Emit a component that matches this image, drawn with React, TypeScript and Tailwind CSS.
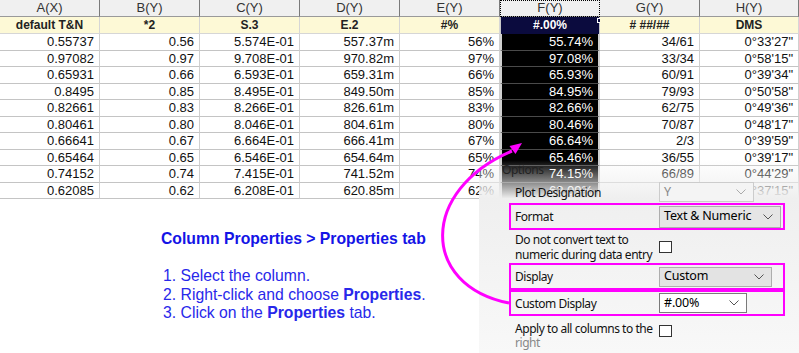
import React from "react";

const heads = ["A(X)", "B(Y)", "C(Y)", "D(Y)", "E(Y)", "F(Y)", "G(Y)", "H(Y)"];
const longNames = ["default T&N", "*2", "S.3", "E.2", "#%", "#.00%", "# ##/##", "DMS"];

const rows = [
  ["0.55737", "0.56", "5.574E-01", "557.37m", "56%", "55.74%", "34/61", "0°33'27\""],
  ["0.97082", "0.97", "9.708E-01", "970.82m", "97%", "97.08%", "33/34", "0°58'15\""],
  ["0.65931", "0.66", "6.593E-01", "659.31m", "66%", "65.93%", "60/91", "0°39'34\""],
  ["0.8495", "0.85", "8.495E-01", "849.50m", "85%", "84.95%", "79/93", "0°50'58\""],
  ["0.82661", "0.83", "8.266E-01", "826.61m", "83%", "82.66%", "62/75", "0°49'36\""],
  ["0.80461", "0.80", "8.046E-01", "804.61m", "80%", "80.46%", "70/87", "0°48'17\""],
  ["0.66641", "0.67", "6.664E-01", "666.41m", "67%", "66.64%", "2/3", "0°39'59\""],
  ["0.65464", "0.65", "6.546E-01", "654.64m", "65%", "65.46%", "36/55", "0°39'17\""],
  ["0.74152", "0.74", "7.415E-01", "741.52m", "74%", "74.15%", "66/89", "0°44'29\""],
  ["0.62085", "0.62", "6.208E-01", "620.85m", "62%", "62.09%", "18/29", "0°37'15\""],
];

const Chevron = ({ color = "#555" }: { color?: string }) => (
  <svg width="10" height="6" viewBox="0 0 10 6" className="shrink-0">
    <polyline points="0.5,0.5 5,5 9.5,0.5" fill="none" stroke={color} strokeWidth="1" />
  </svg>
);

const Select = ({
  text,
  className,
  textClass = "text-black",
  chevron,
}: {
  text: string;
  className: string;
  textClass?: string;
  chevron?: string;
}) => (
  <div className={`flex items-center justify-between pl-[4px] pr-[7px] border ${className}`}>
    <span className={`text-[12.5px] tracking-[-0.2px] leading-none whitespace-nowrap ${textClass}`}>{text}</span>
    <Chevron color={chevron} />
  </div>
);

const Sheet = () => (
  <div className="grid grid-cols-[repeat(7,100px)_99px] font-['Liberation_Sans',Arial,sans-serif]">
    {heads.map((h, i) => (
      <div
        key={h}
        className={`h-[17px] bg-[#f0f0f0] border-b border-b-[#9a9a9a] text-center text-[13px] leading-[16px] text-[#333] ${
          i === 5 ? "outline-1 outline-dotted outline-black -outline-offset-1" : "border-r border-r-[#7a7a7a]"
        }`}
      >
        {h}
      </div>
    ))}
    {longNames.map((n, i) => (
      <div
        key={n}
        className={`relative h-[17px] text-center font-bold text-[12px] leading-[17px] ${
          i === 5
            ? "bg-[#0b0b3e] text-white border-x border-x-[#c8c8c8]"
            : "bg-[#fdf9d6] text-[#222] border-r border-r-[#d6d6d6] border-b border-b-[#d6d6d6]"
        }`}
      >
        {n}
        {i === 5 && (
          <span className="absolute -right-[3px] top-[1px] w-[5px] h-[5px] bg-[#0b0b3e] border border-white" />
        )}
      </div>
    ))}
    {rows.map((r, ri) =>
      r.map((c, ci) => (
        <div
          key={`${ri}-${ci}`}
          className={`h-[16.5px] text-right pr-[5px] text-[13px] leading-[16px] ${
            ci === 5
              ? "bg-black text-white border-x-2 border-x-[#d0d0d0] border-b border-b-[#4a4a4a]"
              : "text-[#111] border-r border-r-[#d0d0d0] border-b border-b-[#c4c4c4]"
          }`}
        >
          {c}
        </div>
      ))
    )}
  </div>
);

const Notes = () => (
  <div className="pl-[161px] pt-[31px] font-['Liberation_Sans',Arial,sans-serif]">
    <div className="text-[15.75px] leading-[18px] font-bold text-[#1414e6]">Column Properties &gt; Properties tab</div>
    <ol className="mt-[19px] pl-[2px] text-[15.75px] leading-[18.5px] text-[#2828ea]">
      <li>1. Select the column.</li>
      <li>
        2. Right-click and choose <b>Properties</b>.
      </li>
      <li>
        3. Click on the <b>Properties</b> tab.
      </li>
    </ol>
  </div>
);

const Row = ({ boxed, className = "", children }: { boxed?: boolean; className?: string; children: React.ReactNode }) => (
  <div
    className={`flex items-center w-[276px] pl-[4px] border-2 ${boxed ? "border-[#ff00ff]" : "border-transparent"} ${className}`}
  >
    {children}
  </div>
);

const Label = ({ children, tight }: { children: React.ReactNode; tight?: boolean }) => (
  <div
    className={`w-[144px] shrink-0 whitespace-nowrap text-[12px] tracking-[-0.45px] text-[#111] ${
      tight ? "leading-[13.5px]" : "leading-[15px]"
    }`}
  >
    {children}
  </div>
);

const Box = () => <div className="w-[13px] h-[12px] border border-[#333] bg-white" />;

const Panel = () => (
  <div className="absolute left-[479px] top-[160px] w-[320px] h-[193px] bg-linear-to-b from-[#efefef]/0 from-0% via-[#efefef] via-[20%] to-[#f8f8f8] font-['Noto_Sans','Open_Sans',sans-serif]">
    <div className="pl-[23px] pt-[2px] h-[21px] text-[12px] tracking-[-0.45px] leading-[16px] text-[#222]">Options</div>
    <div className="pl-[30px] flex flex-col">
      <Row className="h-[22px]">
        <Label>Plot Designation</Label>
        <Select text="Y" className="w-[95px] h-[20px] border-[#cccccc] bg-[#f4f4f4]" textClass="text-[#888]" chevron="#aaa" />
      </Row>
      <Row boxed className="h-[27px]">
        <Label>Format</Label>
        <Select text="Text & Numeric" className="w-[122px] h-[22px] border-[#adadad] bg-[#e5e5e5]" />
      </Row>
      <Row className="h-[33px]">
        <Label>
          Do not convert text to
          <br />
          numeric during data entry
        </Label>
        <Box />
      </Row>
      <Row boxed className="h-[27px]">
        <Label>Display</Label>
        <Select text="Custom" className="w-[113px] h-[20px] border-[#adadad] bg-[#e3e3e3]" />
      </Row>
      <Row boxed className="h-[26px]">
        <Label>Custom Display</Label>
        <Select text="#.00%" className="w-[88px] h-[20px] border-[#7a7a7a] bg-white" />
      </Row>
      <Row className="h-[33px] items-start pt-[4px]">
        <Label tight>
          Apply to all columns to the
          <br />
          <span className="text-[#888]">right</span>
        </Label>
        <div className="mt-[3px]">
          <Box />
        </div>
      </Row>
    </div>
  </div>
);

const Arrow = () => (
  <svg className="absolute left-0 top-0 pointer-events-none" width="799" height="353" viewBox="0 0 799 353">
    <path d="M509 303 C420 285 420 190 512 151" fill="none" stroke="#ff00ff" strokeWidth="3" />
    <polygon points="522,143 509.5,146 515.5,154" fill="#ff00ff" />
  </svg>
);

export default function App() {
  return (
    <div className="relative w-[799px] h-[353px] overflow-hidden bg-white">
      <Sheet />
      <Notes />
      <Panel />
      <Arrow />
    </div>
  );
}
